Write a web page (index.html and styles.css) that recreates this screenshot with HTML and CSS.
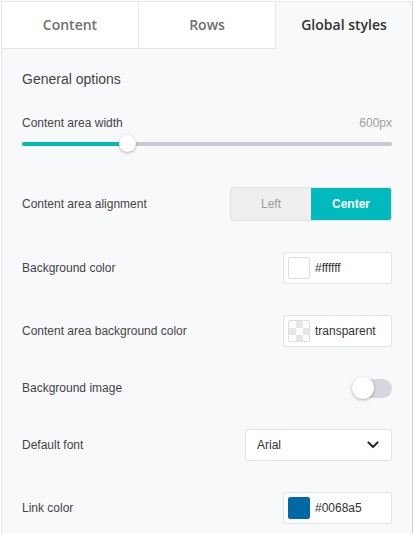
FILE: index.html
```html
<!DOCTYPE html>
<html>
<head>
<meta charset="utf-8">
<link rel="stylesheet" href="styles.css">
</head>
<body>
<div class="panel">
  <nav class="tabs">
    <div class="tab">Content</div>
    <div class="tab">Rows</div>
    <div class="tab active">Global styles</div>
  </nav>
  <div class="content">
    <h2 class="section-title">General options</h2>
    <div class="slider-head">
      <span class="label">Content area width</span>
      <span class="value">600px</span>
    </div>
    <div class="slider">
      <div class="track"><div class="fill" style="width:28.6%"></div></div>
      <div class="knob" style="left:28.6%"></div>
    </div>
    <div class="rows">
      <div class="row">
        <span class="label">Content area alignment</span>
        <div class="seg">
          <span class="seg-btn">Left</span>
          <span class="seg-btn on">Center</span>
        </div>
      </div>
      <div class="row">
        <span class="label">Background color</span>
        <div class="color-input">
          <span class="swatch swatch-white"></span>
          <span class="color-text">#ffffff</span>
        </div>
      </div>
      <div class="row">
        <span class="label">Content area background color</span>
        <div class="color-input">
          <span class="swatch swatch-transparent"></span>
          <span class="color-text">transparent</span>
        </div>
      </div>
      <div class="row">
        <span class="label">Background image</span>
        <div class="toggle">
          <span class="toggle-track"></span>
          <span class="toggle-knob"></span>
        </div>
      </div>
      <div class="row">
        <span class="label">Default font</span>
        <div class="select">
          <span class="select-text">Arial</span>
          <svg class="chevron" width="12" height="8" viewBox="0 0 12 8"><path d="M1.5 1.5 L6 6 L10.5 1.5" fill="none" stroke="#333" stroke-width="2.2" stroke-linecap="round" stroke-linejoin="round"/></svg>
        </div>
      </div>
      <div class="row">
        <span class="label">Link color</span>
        <div class="color-input">
          <span class="swatch swatch-link"></span>
          <span class="color-text">#0068a5</span>
        </div>
      </div>
    </div>
  </div>
</div>
</body>
</html>
```

FILE: styles.css
```css
* { box-sizing: border-box; }
html, body { margin: 0; padding: 0; background: #fff; }
body { font-family: "Liberation Sans", Arial, sans-serif; }

.panel {
  margin: 1px 0 0 1px;
  width: 412px;
  height: 532px;
  overflow: hidden;
  border: 1px solid #e3e6ea;
  border-right-color: #cfd2d6;
  border-bottom: none;
  background: #f8f9fb;
}

.tabs {
  display: grid;
  grid-template-columns: 137px 137px 1fr;
  background: #fff;
}
.tab {
  height: 47px;
  display: flex;
  align-items: center;
  justify-content: center;
  font-family: "Open Sans", sans-serif;
  font-size: 14px;
  font-weight: 600;
  color: #6f6f6f;
  border-bottom: 1px solid #e3e6ea;
  border-right: 1px solid #e3e6ea;
  padding-bottom: 1px;
}
.tab.active {
  background: #f8f9fb;
  color: #333;
  border-bottom-color: transparent;
  border-right: none;
}

.content {
  padding: 20px 20px 0 20px;
}

.section-title {
  margin: 0;
  font-size: 14px;
  font-weight: normal;
  line-height: 20px;
  color: #444;
}

.label {
  font-size: 12px;
  line-height: 16px;
  color: #454545;
}

.slider-head {
  margin-top: 26px;
  display: flex;
  justify-content: space-between;
  align-items: center;
}
.value {
  font-size: 12px;
  line-height: 16px;
  color: #a0a0a0;
}

.slider {
  position: relative;
  margin-top: 4px;
  height: 17px;
  display: flex;
  align-items: center;
}
.track {
  flex: 1;
  height: 4px;
  border-radius: 2px;
  background: #c5cad3;
  overflow: hidden;
}
.fill {
  height: 100%;
  background: #00b9bd;
}
.knob {
  position: absolute;
  top: 0;
  width: 17px;
  height: 17px;
  margin-left: -8.5px;
  border-radius: 50%;
  background: #fff;
  box-shadow: 0 1px 3px rgba(0,0,0,0.3);
}

.rows {
  margin-top: 35px;
  display: flex;
  flex-direction: column;
  gap: 31px;
}
.row {
  display: flex;
  justify-content: space-between;
  align-items: center;
}

.seg {
  display: flex;
  width: 162px;
  height: 34px;
  border: 1px solid #e0e0e0;
  border-radius: 3px;
  overflow: hidden;
}
.seg-btn {
  flex: 1;
  display: flex;
  align-items: center;
  justify-content: center;
  font-size: 12px;
  background: #efefef;
  color: #9a9a9a;
}
.seg-btn.on {
  background: #00babe;
  color: #fff;
  font-weight: bold;
}

.color-input {
  width: 109px;
  height: 32px;
  display: flex;
  align-items: center;
  padding: 0 4px;
  background: #fff;
  border: 1px solid #e1e3e6;
  border-radius: 3px;
}
.swatch {
  width: 22px;
  height: 22px;
  border: 1px solid #dedede;
  border-radius: 2px;
  margin-right: 5px;
  flex: none;
}
.swatch-white { background: #fff; }
.swatch-transparent {
  background: conic-gradient(#e6e6e6 0 25%, #fff 0 50%, #e6e6e6 0 75%, #fff 0) 0 0 / 14px 14px;
}
.swatch-link {
  background: #0068a5;
  border-color: #0068a5;
}
.color-text {
  font-size: 12px;
  color: #333;
}

.toggle {
  position: relative;
  width: 40px;
  height: 20px;
  display: flex;
  align-items: center;
}
.toggle-track {
  width: 40px;
  height: 19px;
  border-radius: 10px;
  background: #d5d8dd;
}
.toggle-knob {
  position: absolute;
  left: 0;
  top: -1px;
  width: 22px;
  height: 22px;
  border-radius: 50%;
  background: #fff;
  box-shadow: 0 1px 3px rgba(0,0,0,0.3);
}

.select {
  width: 147px;
  height: 32px;
  display: flex;
  align-items: center;
  justify-content: space-between;
  padding: 0 12px 0 11px;
  background: #fff;
  border: 1px solid #e1e3e6;
  border-radius: 3px;
}
.select-text {
  font-size: 12px;
  color: #333;
}
.chevron { display: block; }
```
